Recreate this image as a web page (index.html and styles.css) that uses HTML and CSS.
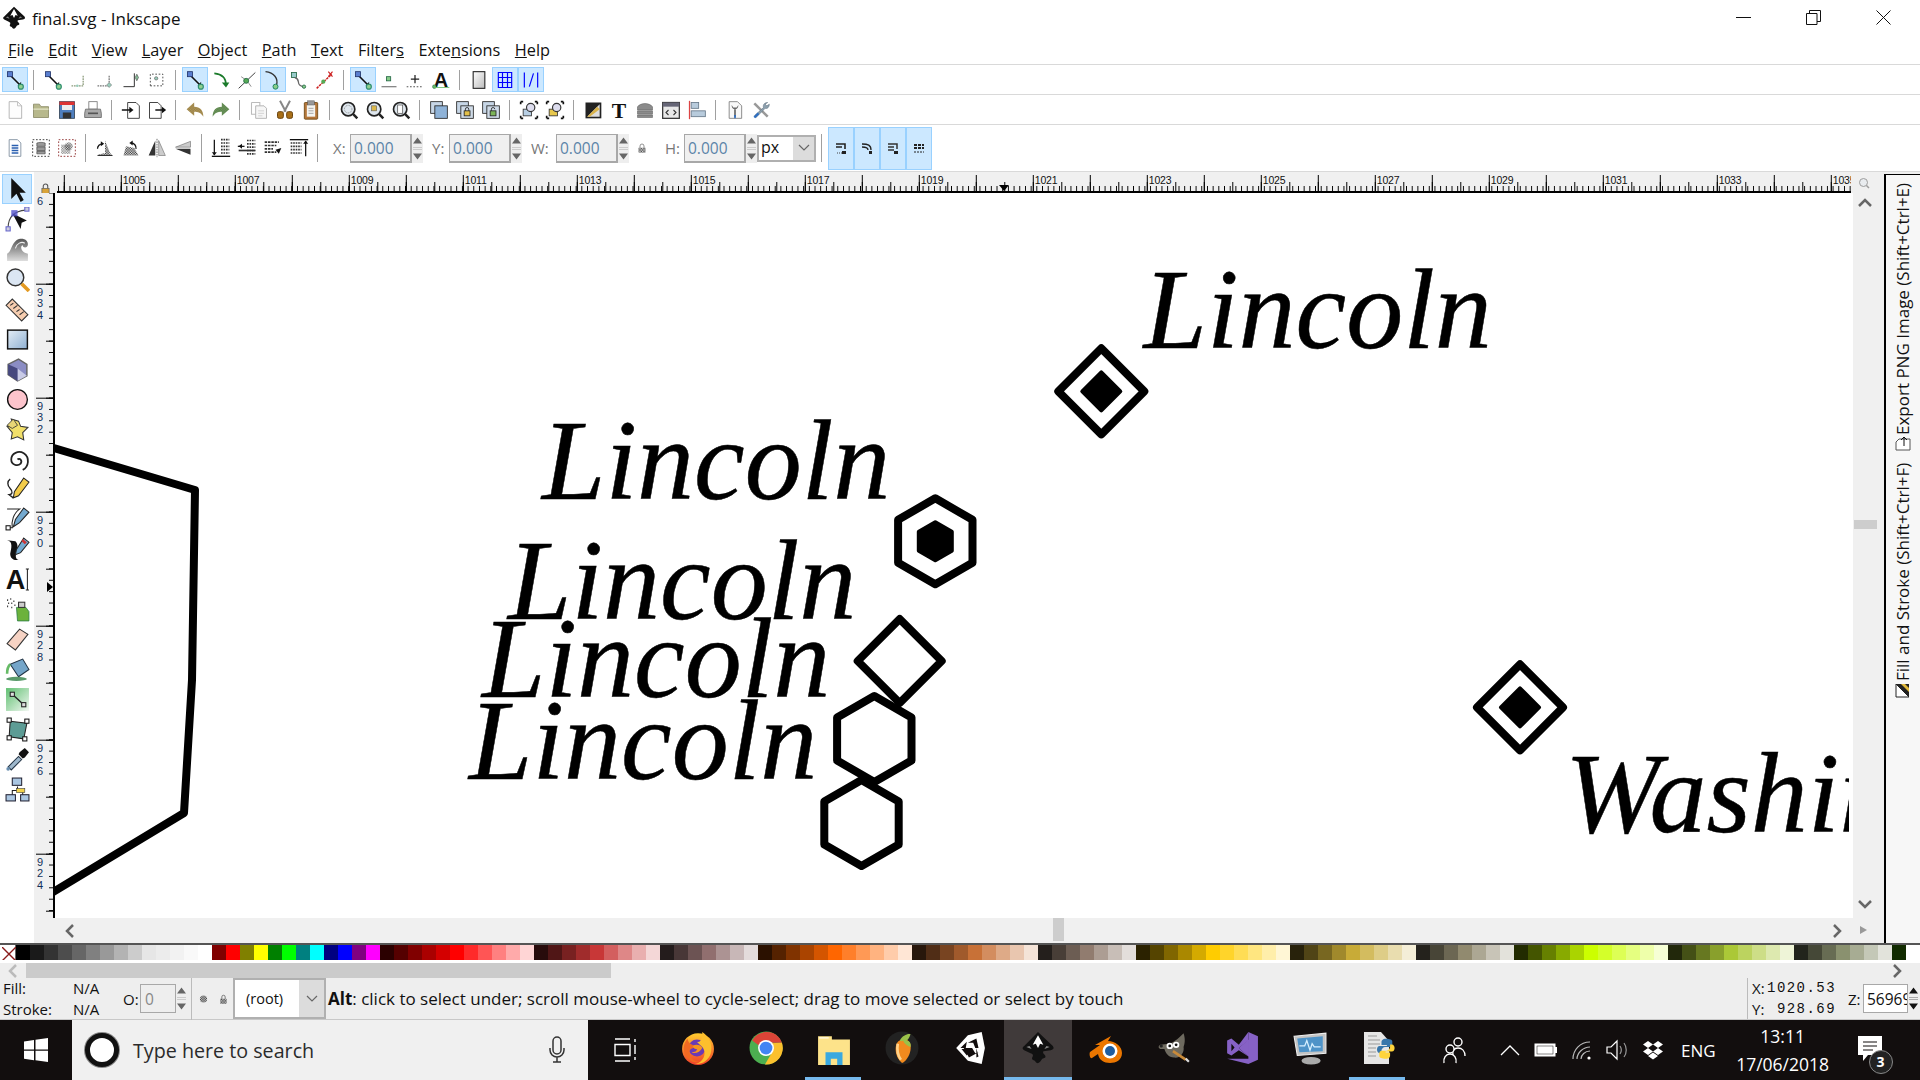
FILE: index.html
```html
<!DOCTYPE html>
<html lang="en">
    <head>
        <meta charset="UTF-8" />
        <title>final.svg - Inkscape</title>
        <link rel="stylesheet" href="styles.css">
    </head>
    <body>
        <!-- shared gradients and icons -->
        <svg class="defs" width="0" height="0">
            <defs>
                <linearGradient id="gBlue" x1="0" y1="0" x2="1" y2="1"><stop offset="0" stop-color="#e3edf6"/><stop offset="1" stop-color="#8fb0d2"/></linearGradient>
                <linearGradient id="gGray" x1="0" y1="0" x2="0" y2="1"><stop offset="0" stop-color="#555"/><stop offset="1" stop-color="#ddd"/></linearGradient>
                <linearGradient id="gGreen" x1="0" y1="0" x2="1" y2="1"><stop offset="0" stop-color="#5fbf70"/><stop offset="1" stop-color="#f2f8f2"/></linearGradient>
                <linearGradient id="gPaper" x1="0" y1="0" x2="1" y2="1"><stop offset="0" stop-color="#fff"/><stop offset="1" stop-color="#bbb"/></linearGradient>
                <linearGradient id="gFox" x1="0" y1="0" x2="0" y2="1"><stop offset="0" stop-color="#ffcb2e"/><stop offset="1" stop-color="#f0402a"/></linearGradient>
                <pattern id="dots" width="2" height="2" patternUnits="userSpaceOnUse"><rect width="1" height="1" fill="#222"/><rect x="1" y="1" width="1" height="1" fill="#222"/></pattern>
                <symbol id="snap" viewBox="0 0 24 24">
                    <path d="M6 6L18 18" stroke="#111" stroke-width="2"/>
                    <path d="M15 18.5l4-.5.5-4z" fill="#111"/>
                    <rect x="3" y="2" width="6" height="6" fill="#5a7fd0" stroke="#22356b"/>
                    <circle cx="19" cy="20" r="3" fill="#8fcf8f" stroke="#2f8f6f" stroke-width="1.4"/>
                </symbol>
                <symbol id="lens" viewBox="0 0 24 24">
                    <circle cx="11" cy="11" r="8" fill="#dfe7ee" stroke="#222" stroke-width="2"/>
                    <path d="M17 17l5 5" stroke="#222" stroke-width="3"/>
                </symbol>
                <symbol id="bars" viewBox="0 0 24 24">
                    <path d="M12 3h10M12 7h10M12 11h10M12 15h10M12 19h10" stroke="#333" stroke-width="2" stroke-dasharray="2 1"/>
                </symbol>
                <symbol id="inkscape" viewBox="0 0 32 32">
                    <path d="M16 1L30 14q2 3-2 4l-7 1q-1 2 1 3 3 3-2 4l-2 3q-3 3-5-1-4-1-2-4 1-2-2-3l-6-3q-3-2 0-4z" fill="#111"/>
                    <path d="M16 4l5 9-3-1-2 4-2-4-3 1z" fill="#fff"/>
                    <path d="M24 14l3 1-5 2zM8 14l-3 1 5 2z" fill="#8a8a8a"/>
                </symbol>
                <symbol id="spin" viewBox="0 0 11 28">
                    <path d="M5.5 3l4.5 6H1zM5.5 25l4.5-6H1z" fill="#666"/>
                    <path d="M1 13h9M1 15h9" stroke="#ccc"/>
                </symbol>
            </defs>
        </svg>

        <header class="titlebar">
            <svg class="app-icon" viewBox="0 0 32 32"><use href="#inkscape"/></svg>
            <span class="title-text">final.svg - Inkscape</span>
            <div class="win-controls">
                <svg width="15" height="15" viewBox="0 0 15 15"><path d="M0 7.500h15" stroke="#111"/></svg>
                <svg width="15" height="15" viewBox="0 0 15 15"><path d="M.5 3.500h10.500v11H.5zM3.500 3.500V.5h11v11H11" fill="none" stroke="#111"/></svg>
                <svg width="15" height="15" viewBox="0 0 15 15"><path d="M.5.5l14 14M14.500.5l-14 14" stroke="#111"/></svg>
            </div>
        </header>

        <nav class="menubar">
            <span><u>F</u>ile</span>
            <span><u>E</u>dit</span>
            <span><u>V</u>iew</span>
            <span><u>L</u>ayer</span>
            <span><u>O</u>bject</span>
            <span><u>P</u>ath</span>
            <span><u>T</u>ext</span>
            <span>Filter<u>s</u></span>
            <span>Exte<u>n</u>sions</span>
            <span><u>H</u>elp</span>
        </nav>

        <!-- snap bar -->
        <div class="toolbar">
            <button class="tb on"><svg class="ic"><use href="#snap"/></svg></button>
            <i class="sep"></i>
            <button class="tb"><svg class="ic"><use href="#snap"/></svg></button>
            <button class="tb"><svg class="ic" viewBox="0 0 24 24"><path d="M3 19h14V6" fill="none" stroke="#8a9a7a" stroke-width="1.5" stroke-dasharray="2 1"/><circle cx="10" cy="19" r="1.5" fill="#9cb"/></svg></button>
            <button class="tb"><svg class="ic" viewBox="0 0 24 24"><path d="M3 19h14V6" fill="none" stroke="#777" stroke-width="1.5" stroke-dasharray="2 1"/><path d="M17 15l3 3-3 3-3-3z" fill="#9cb" stroke="#777" stroke-width=".7"/></svg></button>
            <button class="tb"><svg class="ic" viewBox="0 0 24 24"><path d="M3 20h13V4" fill="none" stroke="#333" stroke-width="1.2"/><path d="M19 5l2 4-2 4-2-4z" fill="#8b9" stroke="#333" stroke-width=".6"/></svg></button>
            <button class="tb"><svg class="ic" viewBox="0 0 24 24"><path d="M4 19h15V5H4z" fill="none" stroke="#333" stroke-width="1" stroke-dasharray="2 2"/><circle cx="11" cy="10" r="2" fill="#9cb" stroke="#555" stroke-width=".7"/></svg></button>
            <i class="sep"></i>
            <button class="tb on"><svg class="ic"><use href="#snap"/></svg></button>
            <button class="tb"><svg class="ic" viewBox="0 0 24 24"><path d="M4 4c10 1 14 6 14 14" fill="none" stroke="#1a7a2a" stroke-width="2"/><path d="M13 15l5 6 4-6z" fill="#1a7a2a"/></svg></button>
            <button class="tb"><svg class="ic" viewBox="0 0 24 24"><path d="M2 22L22 3" stroke="#444" stroke-width="1.2"/><path d="M5 8c5 3 9 7 12 12" fill="none" stroke="#777"/><circle cx="11" cy="13" r="3" fill="#5a5" stroke="#264"/></svg></button>
            <button class="tb on"><svg class="ic" viewBox="0 0 24 24"><path d="M3 2c10 1 16 8 13 17" fill="none" stroke="#333" stroke-width="1.6"/><circle cx="15" cy="20" r="3" fill="#8c8" stroke="#286" stroke-width="1.2"/></svg></button>
            <button class="tb"><svg class="ic" viewBox="0 0 24 24"><rect x="3" y="3" width="6" height="6" fill="#9cc" stroke="#264"/><path d="M7 9c8 2 0 9 10 11" fill="none" stroke="#666" stroke-width="1.6"/><circle cx="18" cy="20" r="2" fill="#8c8" stroke="#264"/></svg></button>
            <button class="tb"><svg class="ic" viewBox="0 0 24 24"><path d="M2 22L20 5" stroke="#c22" stroke-width="1.8" stroke-dasharray="3 1"/><path d="M16 2l5 6M21 2l-5 6" stroke="#c22" stroke-width="1.4"/><circle cx="10" cy="14" r="2.5" fill="#5a5"/></svg></button>
            <i class="sep"></i>
            <button class="tb on"><svg class="ic"><use href="#snap"/></svg></button>
            <button class="tb"><svg class="ic" viewBox="0 0 24 24"><path d="M3 20h18" stroke="#888" stroke-width="1.6"/><rect x="9" y="8" width="5" height="5" fill="#8c8" stroke="#264"/></svg></button>
            <button class="tb"><svg class="ic" viewBox="0 0 24 24"><path d="M7 11h10M12 6v10" stroke="#222" stroke-width="1.5"/><path d="M2 20h20" stroke="#555" stroke-width="1.3" stroke-dasharray="2 2"/></svg></button>
            <button class="tb"><svg class="ic" viewBox="0 0 24 24"><text class="glyph" x="12" y="20" font-size="24" text-anchor="middle">A</text><circle cx="4" cy="20" r="2.2" fill="#6b6" stroke="#264" stroke-width=".6"/><path d="M4 21h18" stroke="#6b6"/></svg></button>
            <i class="sep"></i>
            <button class="tb"><svg class="ic" viewBox="0 0 24 24"><rect x="5" y="2" width="14" height="20" fill="url(#gPaper)" stroke="#222" stroke-width="1.3"/></svg></button>
            <button class="tb on"><svg class="ic" viewBox="0 0 24 24"><path d="M4 3h16v18H4zM4 9h16M4 15h16M9 3v18M15 3v18" fill="none" stroke="#00f" stroke-width="1.4"/></svg></button>
            <button class="tb on"><svg class="ic" viewBox="0 0 24 24"><path d="M4 3v18M20 3v18" stroke="#00f" stroke-width="1.4"/><path d="M10 20L15 4" stroke="#00f" stroke-width="1.4"/></svg></button>
        </div>

        <!-- commands bar -->
        <div class="toolbar">
            <button class="tb"><svg class="ic" viewBox="0 0 24 24"><path d="M5 2h10l5 5v15H5z" fill="#fdfdfd" stroke="#aaa"/><path d="M15 2v5h5" fill="none" stroke="#bbb"/></svg></button>
            <button class="tb"><svg class="ic" viewBox="0 0 24 24"><path d="M3 5h7l2 3h9v13H3z" fill="#b7b88c" stroke="#8a8a66"/><path d="M3 11h18" stroke="#d8d9b8" stroke-width="2"/></svg></button>
            <button class="tb"><svg class="ic" viewBox="0 0 24 24"><rect x="3" y="2" width="18" height="20" fill="#4f7fbf" stroke="#345"/><rect x="3" y="2" width="18" height="4" fill="#d33"/><rect x="6" y="6" width="12" height="6" fill="#eee"/><rect x="7" y="15" width="10" height="7" fill="#333"/></svg></button>
            <button class="tb"><svg class="ic" viewBox="0 0 24 24"><rect x="7" y="2" width="10" height="9" fill="#fff" stroke="#777"/><path d="M3 11h18l1 5v5H2v-5z" fill="#aaa" stroke="#666"/><path d="M6 16h12" stroke="#555" stroke-width="2"/></svg></button>
            <i class="sep"></i>
            <button class="tb"><svg class="ic" viewBox="0 0 24 24"><path d="M8 3h10l4 4v15H8z" fill="#fff" stroke="#222"/><path d="M1 12h12" stroke="#111" stroke-width="1.8"/><path d="M10 8l5 4-5 4z" fill="#111"/></svg></button>
            <button class="tb"><svg class="ic" viewBox="0 0 24 24"><path d="M3 3h10l4 4v15H3z" fill="#fff" stroke="#222"/><path d="M10 12h11" stroke="#111" stroke-width="1.8"/><path d="M18 8l5 4-5 4z" fill="#111"/></svg></button>
            <i class="sep"></i>
            <button class="tb"><svg class="ic" viewBox="0 0 24 24"><path d="M2 11l9-8v5c7 0 11 4 11 12-3-5-6-6-11-6v5z" fill="#b69a56"/><path d="M2 11l9-8v5c7 0 11 4 11 12-3-5-6-6-11-6v5z" fill="url(#dots)" opacity=".25"/></svg></button>
            <button class="tb"><svg class="ic" viewBox="0 0 24 24"><path d="M22 11l-9-8v5C6 8 2 12 2 20c3-5 6-6 11-6v5z" fill="#6e9c5c"/><path d="M22 11l-9-8v5C6 8 2 12 2 20c3-5 6-6 11-6v5z" fill="url(#dots)" opacity=".25"/></svg></button>
            <i class="sep"></i>
            <button class="tb"><svg class="ic" viewBox="0 0 24 24"><path d="M3 3h10v4M3 3v14h5" fill="none" stroke="#bbb" stroke-width="1.3"/><path d="M8 7h10l3 3v12H8z" fill="#f6f6f6" stroke="#aaa"/><path d="M11 13h7M11 16h7M11 19h5" stroke="#ccc"/></svg></button>
            <button class="tb"><svg class="ic" viewBox="0 0 24 24"><path d="M6 1l7 13M18 1l-7 13" stroke="#888" stroke-width="2.4"/><rect x="3" y="14" width="7" height="8" rx="2" fill="#a86f18" stroke="#6a4410" stroke-width="1.2"/><rect x="14" y="14" width="7" height="8" rx="2" fill="#a86f18" stroke="#6a4410" stroke-width="1.2"/></svg></button>
            <button class="tb"><svg class="ic" viewBox="0 0 24 24"><rect x="4" y="3" width="16" height="20" rx="1" fill="#b5773a" stroke="#6a4410"/><rect x="7" y="6" width="10" height="14" fill="#f4f4f0"/><rect x="8" y="1" width="8" height="5" fill="#999" stroke="#555" stroke-width=".6"/><path d="M9 10h6M9 13h6M9 16h6" stroke="#999"/></svg></button>
            <i class="sep"></i>
            <button class="tb"><svg class="ic" viewBox="0 0 24 24"><use href="#lens"/><circle cx="11" cy="11" r="4.5" fill="none" stroke="#777" stroke-dasharray="1 1"/></svg></button>
            <button class="tb"><svg class="ic" viewBox="0 0 24 24"><use href="#lens"/><rect x="8" y="7" width="6" height="6" fill="#dcb94c" stroke="#555" stroke-width=".7"/></svg></button>
            <button class="tb"><svg class="ic" viewBox="0 0 24 24"><use href="#lens"/><rect x="8" y="6" width="6" height="10" fill="#fff" stroke="#555" stroke-width=".9"/></svg></button>
            <i class="sep"></i>
            <button class="tb"><svg class="ic" viewBox="0 0 24 24"><rect x="2" y="2" width="14" height="14" fill="#c7d6e6" stroke="#222"/><rect x="7" y="7" width="15" height="15" fill="#8fb3d8" stroke="#222"/></svg></button>
            <button class="tb"><svg class="ic" viewBox="0 0 24 24"><rect x="2" y="2" width="14" height="14" fill="#c7d6e6" stroke="#222"/><rect x="7" y="7" width="15" height="15" fill="#cfdbe8" stroke="#222"/><rect x="11" y="13" width="7" height="6" fill="#e3c04a" stroke="#222"/><path d="M12.5 13v-2a2 2 0 014 0v2" fill="none" stroke="#222"/></svg></button>
            <button class="tb"><svg class="ic" viewBox="0 0 24 24"><rect x="2" y="2" width="14" height="14" fill="#c7d6e6" stroke="#222"/><rect x="7" y="7" width="15" height="15" fill="#cfdbe8" stroke="#222"/><rect x="11" y="13" width="7" height="6" fill="#7cb457" stroke="#222"/><path d="M12.5 13v-2a2 2 0 014 0" fill="none" stroke="#222"/></svg></button>
            <i class="sep"></i>
            <button class="tb"><svg class="ic" viewBox="0 0 24 24"><path d="M2 2h3M19 2h3M2 22h3M19 22h3M2 2v3M22 2v3M2 19v3M22 19v3" stroke="#111" stroke-width="2"/><rect x="5" y="11" width="10" height="8" fill="#b8cfe4" stroke="#333"/><circle cx="14" cy="9" r="5" fill="#dde" stroke="#333" stroke-width="1.4"/></svg></button>
            <button class="tb"><svg class="ic" viewBox="0 0 24 24"><path d="M2 2h3M19 2h3M2 22h3M19 22h3M2 2v3M22 2v3M2 19v3M22 19v3" stroke="#111" stroke-width="2"/><rect x="5" y="11" width="10" height="8" fill="#e8c84e" stroke="#333"/><circle cx="14" cy="9" r="5" fill="#dde" stroke="#333" stroke-width="1.4"/></svg></button>
            <i class="sep"></i>
            <button class="tb"><svg class="ic" viewBox="0 0 24 24"><rect x="3" y="3" width="19" height="19" fill="#222"/><path d="M5 20L20 5v15z" fill="#ddd"/><path d="M5 20L17 8l3 3-12 9z" fill="#d8b24a"/></svg></button>
            <button class="tb"><svg class="ic" viewBox="0 0 24 24"><text class="glyph serif" x="12" y="21" font-size="26" text-anchor="middle">T</text></svg></button>
            <button class="tb"><svg class="ic" viewBox="0 0 24 24"><path d="M3 8c4-5 14-5 18 0v4H3zM3 13h18v4H3zM3 18h18v3H3z" fill="#8b8b8b" stroke="#555" stroke-width=".6"/></svg></button>
            <button class="tb"><svg class="ic" viewBox="0 0 24 24"><rect x="2" y="3" width="20" height="19" fill="#e8e8e8" stroke="#333" stroke-width="1.5"/><rect x="2" y="3" width="20" height="5" fill="#667"/><path d="M9 12l-3 3 3 3M15 12l3 3-3 3" fill="none" stroke="#333" stroke-width="1.3"/></svg></button>
            <button class="tb"><svg class="ic" viewBox="0 0 24 24"><path d="M3 1v22" stroke="#d44" stroke-width="1.5"/><rect x="5" y="3" width="9" height="7" fill="#b8cbdc" stroke="#678"/><rect x="5" y="13" width="17" height="7" fill="#b8cbdc" stroke="#678"/></svg></button>
            <i class="sep"></i>
            <button class="tb"><svg class="ic" viewBox="0 0 24 24"><path d="M5 2h10l5 5v15H5z" fill="#f8f8f8" stroke="#777"/><path d="M8 6c0 4 2 5 4 5s4-1 4-5l-2 3h-4zM11 11h2v9h-2z" fill="#666"/><path d="M11 18h2v4h-2z" fill="#2a6ac0"/></svg></button>
            <button class="tb"><svg class="ic" viewBox="0 0 24 24"><path d="M4 4l16 16" stroke="#999" stroke-width="3"/><path d="M20 3c-4 0-6 3-5 6L4 19l2 2 11-11c3 1 5-2 5-5l-3 2-2-2z" fill="#8da0ad" stroke="#567" stroke-width=".6"/><path d="M3 20l5-5 2 2-5 5z" fill="#2f6fc0"/></svg></button>
        </div>

        <!-- selector controls bar -->
        <div class="toolbar toolbar-tall">
            <button class="tb"><svg class="ic" viewBox="0 0 24 24"><path d="M5 2h10l4 4v16H5z" fill="#fff" stroke="#789"/><path d="M8 9h8M8 12h8M8 15h8M8 18h8" stroke="#2a5fb0" stroke-width="1.6"/></svg></button>
            <button class="tb"><svg class="ic" viewBox="0 0 24 24"><rect x="2" y="2" width="20" height="20" fill="none" stroke="#222" stroke-dasharray="2 2"/><path d="M7 6c3-1 7-1 10 0v4H7zM7 11h10v4H7zM7 16h10v3H7z" fill="#999" stroke="#333" stroke-width=".7"/></svg></button>
            <button class="tb"><svg class="ic" viewBox="0 0 24 24"><rect x="2" y="2" width="20" height="20" fill="none" stroke="#822" stroke-dasharray="2 2"/><rect x="5" y="8" width="11" height="11" fill="url(#dots)" opacity=".6"/><circle cx="14" cy="10" r="5" fill="url(#dots)" opacity=".7"/></svg></button>
            <i class="sep"></i>
            <button class="tb"><svg class="ic" viewBox="0 0 24 24"><path d="M3 20l9-2V3l6 15 3 3H6z" fill="url(#dots)"/><path d="M3 13a6 6 0 016-6" fill="none" stroke="#111" stroke-width="1.5"/><path d="M7 4l4 3-4 3z" fill="#111"/><path d="M3 21h18" stroke="#111"/></svg></button>
            <button class="tb"><svg class="ic" viewBox="0 0 24 24"><path d="M3 21l3-11 10 2 5 9z" fill="url(#dots)"/><path d="M18 13a6 6 0 00-6-7" fill="none" stroke="#111" stroke-width="1.5"/><path d="M14 3l-4 3 4 3z" fill="#111"/></svg></button>
            <button class="tb"><svg class="ic" viewBox="0 0 24 24"><path d="M10 3L2 21h8z" fill="#333"/><path d="M14 3l8 18h-8z" fill="#ccc" stroke="#555" stroke-width=".6"/><path d="M12 1v22" stroke="#555" stroke-dasharray="2 1"/></svg></button>
            <button class="tb"><svg class="ic" viewBox="0 0 24 24"><path d="M21 4L3 11h18z" fill="#ccc" stroke="#555" stroke-width=".6"/><path d="M21 20L3 13h18z" fill="#333"/></svg></button>
            <i class="sep"></i>
            <button class="tb"><svg class="ic" viewBox="0 0 24 24"><path d="M4 2v18" stroke="#111" stroke-width="1.5"/><path d="M1 17l3 4 3-4z" fill="#111"/><path d="M1 22h22" stroke="#111" stroke-width="1.6"/><use href="#bars" x="0" y="-1" width="24" height="24"/></svg></button>
            <button class="tb"><svg class="ic" viewBox="0 0 24 24"><path d="M1 10h8" stroke="#111" stroke-width="1.5"/><path d="M6 7l4 3-4 3z" fill="#111" transform="rotate(180 6 10)"/><use href="#bars"/><path d="M2 15h20" stroke="#333" stroke-width="2"/></svg></button>
            <button class="tb"><svg class="ic" viewBox="0 0 24 24"><path d="M2 5h17M2 9h14M2 13h10M2 17h14" stroke="#333" stroke-width="2" stroke-dasharray="3 1"/><path d="M15 14l7-2-3 7z" fill="#111"/></svg></button>
            <button class="tb"><svg class="ic" viewBox="0 0 24 24"><path d="M20 4v18" stroke="#111" stroke-width="1.5"/><path d="M17 7l3-4 3 4z" fill="#111"/><path d="M1 2h22" stroke="#111" stroke-width="1.6"/><path d="M2 6h13M2 10h13M2 14h13M2 18h13" stroke="#333" stroke-width="2" stroke-dasharray="2 1"/></svg></button>
            <i class="sep"></i>
            <div class="field"><label>X:</label><span class="num">0.000</span><svg class="spinner"><use href="#spin"/></svg></div>
            <div class="field"><label>Y:</label><span class="num">0.000</span><svg class="spinner"><use href="#spin"/></svg></div>
            <div class="field field-w"><label>W:</label><span class="num">0.000</span><svg class="spinner"><use href="#spin"/></svg></div>
            <svg class="wh-lock" viewBox="0 0 10 12"><path d="M2.500 6V3.500a2.500 2.500 0 015 0V6" fill="none" stroke="#777"/><rect x="1" y="6" width="8" height="5.500" fill="url(#dots)" stroke="#888" stroke-width=".6"/></svg>
            <div class="field field-h"><label>H:</label><span class="num">0.000</span><svg class="spinner"><use href="#spin"/></svg></div>
            <div class="combo combo-unit"><span>px</span><b><svg width="12" height="8" viewBox="0 0 12 8"><path d="M1 1l5 5 5-5" fill="none" stroke="#666" stroke-width="1.2"/></svg></b></div>
            <i class="sep sep-unit"></i>
            <div class="toggles">
                <button><svg viewBox="0 0 14 14"><path d="M2 3h9v5M2 6h6" fill="none" stroke="#222" stroke-width="1.6"/><path d="M3 12h6" stroke="#444" stroke-dasharray="1 1"/><path d="M8 10h4v3H8z" fill="#222"/></svg></button>
                <button><svg viewBox="0 0 14 14"><path d="M2 3c6 0 9 1 9 6M2 6c3 0 6 0 6 3" fill="none" stroke="#222" stroke-width="1.3"/><path d="M9 10h3v3H9z" fill="#222"/></svg></button>
                <button><svg viewBox="0 0 14 14"><path d="M2 3h9v5M2 6h6M2 9h6" fill="none" stroke="#333" stroke-width="1.500"/><path d="M8 10h4v3H8z" fill="#222"/></svg></button>
                <button><svg viewBox="0 0 14 14"><path d="M2 3h3v2H2zM6 3h3v2H6zM10 3h2v2h-2zM2 6h3v2H2zM6 6h3v2H6zM10 6h2v2h-2z" fill="#222"/><path d="M2 11h10" stroke="#222" stroke-dasharray="2 1"/></svg></button>
            </div>
        </div>

        <div class="workspace">
            <aside class="toolbox">
                <button class="tool on"><svg viewBox="0 0 24 24"><path d="M6 1v20l5-5 4 8 3-2-4-7h6z" fill="#111"/></svg></button>
                <button class="tool"><svg viewBox="0 0 24 24"><path d="M3 20C3 10 8 4 20 3" fill="none" stroke="#444"/><path d="M7 6l14 7-5 2-1 6z" fill="#111"/><rect x="6" y="3" width="6" height="6" fill="#55c" opacity=".8"/><rect x="19" y="0" width="4" height="4" fill="#ccd" stroke="#66c"/><rect x="1" y="19" width="4" height="4" fill="#ccd" stroke="#66c"/></svg></button>
                <button class="tool"><svg viewBox="0 0 24 24"><path d="M2 23v-7C6 14 6 7 11 3c5-3 11-1 11 4 0 4-5 4-5 1-3 1-1 6 2 7l3 1v7z" fill="url(#gGray)"/><path d="M10 11c1-5 6-7 9-5" fill="none" stroke="#eee"/></svg></button>
                <button class="tool"><svg viewBox="0 0 24 24"><circle cx="10" cy="10" r="8" fill="#dbe6f3" stroke="#333" stroke-width="1.4"/><path d="M16 16l7 7" stroke="#e39a22" stroke-width="3.5"/></svg></button>
                <button class="tool"><svg viewBox="0 0 24 24"><path d="M1 8l6-6 15 15-6 6z" fill="#f6cdb0" stroke="#333"/><path d="M5 8l3-2M8 11l4-3M11 14l3-2M14 17l4-3" stroke="#333"/></svg></button>
                <button class="tool"><svg viewBox="0 0 24 24"><rect x="2.500" y="3" width="19" height="18" fill="url(#gBlue)" stroke="#111" stroke-width="1.4"/></svg></button>
                <button class="tool"><svg viewBox="0 0 24 24"><path d="M3 7l10-5 8 5v11l-9 5-9-6z" fill="#8b8dc4" stroke="#666" stroke-width="1.4"/><path d="M12 11l9 7-9 5z" fill="#c9cbe6"/><path d="M3 7l9 4v12l-9-6z" fill="#46487f"/></svg></button>
                <button class="tool"><svg viewBox="0 0 24 24"><circle cx="12" cy="12" r="9.500" fill="#fcc4cc" stroke="#111" stroke-width="1.300"/></svg></button>
                <button class="tool"><svg viewBox="0 0 24 24"><path d="M6 2l7 2 2 5 7 1-5 5 1 7-6-3-6 2 1-6-5-6 6-1z" fill="#f2e06a" stroke="#333" stroke-width="1"/><path d="M8 2l-6 6 5 3 5-3z" fill="#e8d676" stroke="#333" stroke-width=".8"/></svg></button>
                <button class="tool"><svg viewBox="0 0 24 24"><path d="M12 12c2-2 5 1 3 4-3 3-9 1-9-4 0-6 7-9 12-6 6 4 5 13-1 16" fill="none" stroke="#222" stroke-width="1.700"/></svg></button>
                <button class="tool"><svg viewBox="0 0 24 24"><path d="M5 2C2 4 2 8 5 11c3 3 2 6-1 6l4 3" fill="none" stroke="#222" stroke-width="1.300"/><path d="M18 1l5 4-10 13-5 2 1-6z" fill="#f3cc4a" stroke="#222"/></svg></button>
                <button class="tool"><svg viewBox="0 0 24 24"><path d="M2 2h12C8 6 6 14 7 20H3" fill="none" stroke="#222"/><rect x="1" y="18" width="4" height="4" fill="#fff" stroke="#111"/><path d="M18 1l5 4-9 10-6 4 2-7z" fill="#74a9cf" stroke="#222"/></svg></button>
                <button class="tool"><svg viewBox="0 0 24 24"><path d="M2 3c6 1 4 8 3 13 0 4 3 7 8 6-3-1-3-4-2-7 1-4 2-8-1-11z" fill="#111"/><path d="M18 1l5 4-8 10-5 2 1-5z" fill="#74a9cf" stroke="#222"/><path d="M17 2l4 3-2 2-3-3z" fill="#c33"/></svg></button>
                <button class="tool"><svg viewBox="0 0 24 24"><text class="glyph" x="10" y="21" font-size="26" text-anchor="middle">A</text><path d="M20 2h3M21.500 2v20M20 22h3" stroke="#222"/></svg></button>
                <button class="tool"><svg viewBox="0 0 24 24"><path d="M11 10h9l3 4v9H12z" fill="#6cb23c" stroke="#274" stroke-width=".7"/><rect x="13" y="5" width="6" height="5" fill="#ccc" stroke="#333"/><path d="M2 3h1M5 2h1M8 4h1M3 6h1M6 6h1M9 8h1M2 9h1M6 10h1" stroke="#333" stroke-width="1.500"/></svg></button>
                <button class="tool"><svg viewBox="0 0 24 24"><path d="M2 16L14 2l8 5-12 15z" fill="#f6d3c4" stroke="#333"/></svg></button>
                <button class="tool"><svg viewBox="0 0 24 24"><path d="M5 7l12-5 6 10-10 7z" fill="#74a5c9" stroke="#234"/><path d="M5 7c-2 2-3 4-3 9" fill="none" stroke="#6b6" stroke-width="2.500"/><ellipse cx="11" cy="21" rx="10" ry="2" fill="#5a9a6a"/></svg></button>
                <button class="tool"><svg viewBox="0 0 24 24"><rect x="1" y="1" width="22" height="22" fill="url(#gGreen)"/><path d="M7 7l11 10" stroke="#222" stroke-width="1.300"/><rect x="5" y="5" width="4" height="4" fill="#ddd" stroke="#222"/><rect x="16" y="15" width="4" height="4" fill="#ddd" stroke="#222"/></svg></button>
                <button class="tool"><svg viewBox="0 0 24 24"><path d="M5 4l16 2-3 15-14-2z" fill="#5d9c95" stroke="#222"/><rect x="2" y="1" width="4" height="4" fill="#fff" stroke="#111"/><rect x="19" y="2" width="4" height="4" fill="#fff" stroke="#111"/><rect x="2" y="18" width="4" height="4" fill="#fff" stroke="#111"/><rect x="17" y="19" width="4" height="4" fill="#fff" stroke="#111"/></svg></button>
                <button class="tool"><svg viewBox="0 0 24 24"><path d="M3 19L13 9l3 3L6 22z" fill="#9fb8cc" stroke="#234"/><path d="M14 5l5-4 4 4-4 5-2 1-4-4z" fill="#111"/><circle cx="3" cy="21" r="1.700" fill="#6a8fb0"/></svg></button>
                <button class="tool"><svg viewBox="0 0 24 24"><path d="M12 9v4H7v5M12 13h5v5" fill="none" stroke="#222"/><rect x="7" y="1" width="9" height="7" fill="#aac6e2" stroke="#223"/><rect x="11" y="11" width="8" height="4" fill="#f2d24a" stroke="#444" stroke-width=".6"/><rect x="1" y="17" width="9" height="6" fill="#aac6e2" stroke="#223"/><rect x="15" y="17" width="8" height="6" fill="#aac6e2" stroke="#223"/></svg></button>
            </aside>

            <div class="editor">
                <div class="ruler-row">
                    <div class="corner"><svg width="9" height="11" viewBox="0 0 10 12"><path d="M2.500 6V3.500a2.500 2.500 0 015 0V6" fill="none" stroke="#555" stroke-width="1.200"/><rect x="1" y="6" width="8" height="5.500" fill="#d9a43a" stroke="#555" stroke-width=".7"/></svg></div>
                    <div class="ruler-h" id="rulerH"><i class="ruler-pointer"></i></div>
                    <div class="corner-end"><svg width="12" height="12" viewBox="0 0 24 24"><use href="#lens" opacity=".4"/></svg></div>
                </div>
                <div class="editor-mid">
                    <div class="ruler-v" id="rulerV"><i class="ruler-pointer-v"></i></div>
                    <main class="canvas">
                        <svg class="drawing" viewBox="55 193 1794 725" width="1794" height="725">
                            <path class="stroke" d="M40 444L195 490 192 680 184 813 40 900"/>
                            <text class="lincoln" x="1143.500" y="348">Lincoln</text>
                            <text class="lincoln" x="542" y="498.500">Lincoln</text>
                            <text class="lincoln" x="508" y="618.500">Lincoln</text>
                            <text class="lincoln" x="482" y="696.500">Lincoln</text>
                            <text class="lincoln" x="469" y="779">Lincoln</text>
                            <text class="lincoln" x="1565" y="831.500">Washington</text>
                            <path class="stroke" d="M1101.300 348.300l43 43-43 43-43-43z"/>
                            <path class="solid" d="M1101.300 372.300l19 19-19 19-19-19z"/>
                            <path class="stroke" d="M1520 664.300l43 43-43 43-43-43z"/>
                            <path class="solid" d="M1520 688.300l19 19-19 19-19-19z"/>
                            <path class="stroke" d="M935.300 498.300l37.200 21.500v43l-37.200 21.500-37.200-21.500v-43z"/>
                            <path class="solid" d="M935.300 522.300l16.500 9.500v19l-16.500 9.500-16.500-9.500v-19z"/>
                            <path class="stroke" d="M899.700 619l42 42-42 42-42-42z"/>
                            <path class="stroke" d="M874.300 696l37.200 21.500v43L874.300 782l-37.200-21.500v-43z"/>
                            <path class="stroke" d="M861.500 780l37.200 21.500v43L861.500 866l-37.200-21.500v-43z"/>
                        </svg>
                    </main>
                    <div class="vscroll">
                        <svg width="14" height="9" viewBox="0 0 14 9"><path d="M1 8l6-6 6 6" fill="none" stroke="#666" stroke-width="2.500"/></svg>
                        <i class="vthumb"></i>
                        <svg width="14" height="9" viewBox="0 0 14 9"><path d="M1 1l6 6 6-6" fill="none" stroke="#666" stroke-width="2.500"/></svg>
                    </div>
                </div>
                <div class="hscroll">
                    <svg width="9" height="14" viewBox="0 0 9 14"><path d="M8 1L2 7l6 6" fill="none" stroke="#666" stroke-width="2.500"/></svg>
                    <i class="hthumb"></i>
                    <svg width="9" height="14" viewBox="0 0 9 14"><path d="M1 1l6 6-6 6" fill="none" stroke="#666" stroke-width="2.500"/></svg>
                    <svg class="cms" width="7" height="8" viewBox="0 0 7 8"><path d="M0 0l7 4-7 4z" fill="#999"/></svg>
                </div>
            </div>

            <aside class="dock">
                <div class="dock-tabs">
                    <span class="dock-tab"><svg width="16" height="16" viewBox="0 0 16 16"><path d="M1 14L14 1v13z" fill="#222"/><path d="M1 1h13L1 14z" fill="#fff" stroke="#222"/><path d="M6 14l8-8v4l-4 4z" fill="#e0b83c"/></svg>Fill and Stroke (Shift+Ctrl+F)</span>
                    <span class="dock-tab"><svg width="16" height="16" viewBox="0 0 16 16"><path d="M2 1h8l3 3v11H2z" fill="#fff" stroke="#555"/><path d="M6 9h9M12 6l3 3-3 3" fill="none" stroke="#111"/></svg>Export PNG Image (Shift+Ctrl+E)</span>
                </div>
            </aside>
        </div>

        <div class="palette" id="palette">
            <span class="swatch none"><svg width="14" height="14" viewBox="0 0 14 14"><path d="M0 0l14 14M14 0L0 14" stroke="#8a1c1c" stroke-width="1.400"/></svg></span>
        </div>

        <div class="palette-scroll">
            <svg width="9" height="14" viewBox="0 0 9 14"><path d="M8 1L2 7l6 6" fill="none" stroke="#bbb" stroke-width="2.500"/></svg>
            <i class="pthumb"></i>
            <svg width="9" height="14" viewBox="0 0 9 14"><path d="M1 1l6 6-6 6" fill="none" stroke="#666" stroke-width="2.500"/></svg>
        </div>

        <footer class="statusbar">
            <div class="fillstroke">
                <span>Fill:</span><span>N/A</span>
                <span>Stroke:</span><span>N/A</span>
            </div>
            <div class="opacity">
                <label>O:</label><span class="num num-o">0</span><svg class="spinner"><use href="#spin"/></svg>
            </div>
            <i class="status-sep"></i>
            <svg class="layer-ic" viewBox="0 0 10 10"><circle cx="5" cy="5" r="4" fill="url(#dots)"/></svg>
            <svg class="layer-ic" viewBox="0 0 10 12"><path d="M3 6V3.500a2 2 0 014 0V6" fill="none" stroke="#666"/><rect x="1.500" y="6" width="7" height="5.500" fill="url(#dots)" stroke="#777" stroke-width=".5"/></svg>
            <div class="combo combo-layer"><span>(root)</span><b><svg width="12" height="8" viewBox="0 0 12 8"><path d="M1 1l5 5 5-5" fill="none" stroke="#666" stroke-width="1.200"/></svg></b></div>
            <p class="hint"><b>Alt</b>: click to select under; scroll mouse-wheel to cycle-select; drag to move selected or select by touch</p>
            <div class="coords">
                <span>X:</span><code>1020.53</code>
                <span>Y:</span><code>928.69</code>
            </div>
            <label class="zoom-label">Z:</label>
            <span class="num num-z">56969</span>
            <svg class="spinner spinner-z" viewBox="0 0 11 28"><path d="M5.500 3l4.500 6H1zM5.500 25l4.500-6H1z" fill="#111"/><path d="M1 13h9M1 15h9" stroke="#aaa"/></svg>
        </footer>

        <div class="taskbar">
            <svg class="start" width="24" height="24" viewBox="0 0 24 24"><path d="M0 3.500l10-1.500v9.500H0zM11.500 1.800L24 0v11.500H11.500zM0 12.800h10v9.500L0 20.800zM11.500 12.800H24V24l-12.500-1.800z" fill="#fff"/></svg>
            <div class="searchbox">
                <i class="cortana"></i>
                <span>Type here to search</span>
                <svg class="mic" width="16" height="28" viewBox="0 0 16 28"><rect x="4" y="1" width="8" height="17" rx="4" fill="none" stroke="#333" stroke-width="1.500"/><path d="M1 12v2a7 7 0 0014 0v-2M8 21v5M4 26h8" fill="none" stroke="#333" stroke-width="1.500"/></svg>
            </div>
            <svg class="taskview" width="26" height="24" viewBox="0 0 26 24"><path d="M4 1h15M4 6.500h15v11H4zM4 23h15M24 1v3M24 7v9M24 19v3" fill="none" stroke="#fff" stroke-width="1.400"/></svg>
            <div class="apps">
                <span class="app"><svg viewBox="0 0 32 32"><circle cx="16" cy="17" r="15" fill="url(#gFox)"/><circle cx="15" cy="16" r="8" fill="#6b3ab5"/><path d="M20 1c7 5 10 12 8 20-2 7-9 11-15 10 6-1 10-6 9-12-1-5-5-6-7-9 2 1 5 0 5-9z" fill="#fdbf2d"/><path d="M6 7c-3 4-4 8-3 13 2 7 9 11 15 9-6 0-10-4-10-9 0-4 4-4 7-5-3-2-8-2-9-8z" fill="#f26a22"/><path d="M11 14c3-2 8-1 9 2-2 4-7 6-10 4 3 0 5-1 5-3-2 0-3-1-4-3z" fill="#f7941d"/></svg></span>
                <span class="app"><svg viewBox="0 0 32 32"><circle cx="16" cy="16" r="15.500" fill="#4caf50"/><path d="M3 9a15.500 15.500 0 0126-2l2 4H16a5 5 0 00-6 3z" fill="#db4437"/><path d="M31 11a15.500 15.500 0 01-16 20.500l7-12a7 7 0 00-3-8z" fill="#fbc02d"/><circle cx="16" cy="16" r="7.500" fill="#fff"/><circle cx="16" cy="16" r="6" fill="#4285f4"/></svg></span>
                <span class="app app-running"><svg viewBox="0 0 32 32"><path d="M1 5h13v3h17v25H1z" fill="#fde38a"/><path d="M2 6h9v1H2z" fill="#fff"/><path d="M8 33V20h16v13h-5v-7h-6v7z" fill="#3aa9e0"/></svg></span>
                <span class="app"><svg viewBox="0 0 32 32"><circle cx="16" cy="16" r="15.500" fill="#222"/><path d="M16 8c6-1 9 3 8 10-1 6-5 11-8 12-4-3-6-8-6-13 0-5 2-8 6-9z" fill="#f28a1e"/><path d="M14 9c2-5 8-7 10-6-1 3-2 5-4 6 3 0 5 3 4 6-3-1-6-3-7-6-1 1-2 1-3 0z" fill="#9ac14a"/><path d="M12 12c-1 6 0 11 3 15" fill="none" stroke="#ffd28a" stroke-width="2.500"/></svg></span>
                <span class="app"><svg viewBox="0 0 32 32"><path d="M27 1l3 15-3 15-13-3-11-12L14 4z" fill="#fff"/><path d="M14 11l8-4 2 9-3 0-2-5zM10 16h8l3 5 3-1-9 5zM7 16l6-6-1 6zM22 16l2 8-2 1zM13 23l-5-6h8z" fill="#120d0d"/></svg></span>
                <span class="app app-active"><svg viewBox="0 0 32 32"><use href="#inkscape"/></svg></span>
                <span class="app"><svg viewBox="0 0 34 32"><path d="M1 20l10-7H6l16-9-3 5c7 0 14 5 14 12 0 7-6 10-12 10-6 0-11-3-12-9l-6 4c-2 1-3-4-2-6z" fill="#ea7600"/><circle cx="21" cy="19" r="7.500" fill="#fff"/><circle cx="21" cy="19" r="5" fill="#1f5d9f"/></svg></span>
                <span class="app"><svg viewBox="0 0 32 32"><path d="M25 2c2 6 1 10 0 13 1 5-3 11-9 10-5 0-8-4-9-8l-4 0c-2-1-2-3 0-4l8-1c4-1 8-4 14-10z" fill="#6e6a5f"/><circle cx="12" cy="14" r="3" fill="#fff"/><circle cx="18" cy="13" r="3" fill="#fff"/><circle cx="12" cy="14" r="1.300" fill="#111"/><circle cx="18" cy="13" r="1.300" fill="#111"/><path d="M15 19l12 8" stroke="#c98a3a" stroke-width="2.500"/><path d="M27 26l3 3" stroke="#ddd" stroke-width="2"/><circle cx="4" cy="14" r="1.500" fill="#222"/></svg></span>
                <span class="app"><svg viewBox="0 0 32 32"><path d="M22 1l9 4v22l-9 4-20-5 20 0zM22 8L13 16l9 8z" fill="#8661c5"/><path d="M2 9l4-2 7 6 9-12v8l-9 7 9 8-9-6-7 5-4-2zM6 12v7l3-3.500z" fill="#8661c5"/></svg></span>
                <span class="app"><svg viewBox="0 0 32 32"><path d="M1 5l30-3v19L4 23z" fill="#c4c4c4" stroke="#eee"/><path d="M4 7l24-2v14L6 20z" fill="#4e93c8"/><path d="M6 14h5l2-5 3 9 2-6 2 3h6" fill="none" stroke="#d7f0ff" stroke-width="1.200"/><ellipse cx="17" cy="28" rx="9" ry="3.500" fill="#aaa"/></svg></span>
                <span class="app app-running app-split"><svg viewBox="0 0 32 34"><path d="M2 1h17l8 9v23H2z" fill="#e6e6e6"/><path d="M6 5h9M6 9h12M6 13h12M6 17h8M6 21h8M6 25h8" stroke="#999"/><path d="M20 12c-4 0-5 2-5 4v3h6v1h-8c-2 0-3 2-3 4s1 4 3 4h2v-3c0-2 2-4 4-4h5c2 0 3-1 3-3v-3c0-2-3-3-7-3z" fill="#3776ab" transform="translate(6 -3) scale(.9)"/><path d="M24 32c4 0 5-2 5-4v-3h-5v-1h7c2 0 3-2 3-4s-1-4-3-4h-2v3c0 2-2 4-4 4h-5c-2 0-3 1-3 3v3c0 2 3 3 7 3z" fill="#ffd43b" transform="translate(2 -1) scale(.9)"/></svg></span>
            </div>
            <div class="tray">
                <svg width="26" height="28" viewBox="0 0 26 28"><circle cx="16" cy="6" r="4" fill="none" stroke="#fff" stroke-width="1.400"/><path d="M11 19c-1-4 1-7 5-7s7 3 7 8" fill="none" stroke="#fff" stroke-width="1.400"/><circle cx="8" cy="13" r="4" fill="#120e0e" stroke="#fff" stroke-width="1.400"/><path d="M2 27c-1-5 2-9 6-9s7 4 6 9" fill="none" stroke="#fff" stroke-width="1.400"/></svg>
                <svg class="tray-up" width="20" height="12" viewBox="0 0 20 12"><path d="M1 11l9-9 9 9" fill="none" stroke="#fff" stroke-width="1.300"/></svg>
                <svg class="tray-bat" width="24" height="14" viewBox="0 0 24 14"><rect x="1" y="1" width="20" height="12" fill="#fff" stroke="#fff"/><rect x="3" y="3" width="16" height="8" fill="#fff" stroke="#120e0e" stroke-width=".5"/><rect x="21" y="4" width="2" height="6" fill="#fff"/></svg>
                <svg class="tray-wifi" width="20" height="20" viewBox="0 0 20 20"><path d="M1 19C1 10 8 2 18 2M5 19c0-6 6-12 13-12M9 19c0-4 4-8 9-8" fill="none" stroke="#bbb" stroke-width="1.200"/><circle cx="17" cy="18" r="1.600" fill="#fff"/></svg>
                <svg class="tray-vol" width="22" height="22" viewBox="0 0 22 22"><path d="M1 8h4l6-6v18l-6-6H1z" fill="none" stroke="#fff" stroke-width="1.200"/><path d="M14 7c2 3 2 5 0 8M18 4c3 4 3 10 0 14" fill="none" stroke="#999" stroke-width="1.200"/></svg>
                <svg class="tray-box" width="22" height="20" viewBox="0 0 22 20"><path d="M6 1L1 4.500 6 8l5-3.500zM16 1l-5 3.500L16 8l5-3.500zM1 11.500L6 15l5-3.500L6 8zM21 11.500L16 15l-5-3.500L16 8zM6 16l5 3.500 5-3.500-5-3.500z" fill="#fff"/></svg>
                <span class="lang">ENG</span>
            </div>
            <div class="clock">
                <span>13:11</span>
                <span>17/06/2018</span>
            </div>
            <div class="notify">
                <svg width="26" height="30" viewBox="0 0 26 30"><path d="M1 1h24v19H11l-5 6v-6H1z" fill="#fff"/><path d="M6 7h14M6 11h14M6 15h10" stroke="#120e0e" stroke-width="1.200"/></svg>
                <span class="badge">3</span>
            </div>
        </div>

        <script src="script.js"></script>
    </body>
</html>
```

FILE: styles.css
```css
* {
    box-sizing: border-box;
}

html,
body {
    margin: 0;
    padding: 0;
    height: 100%;
    overflow: hidden;
}

body {
    display: flex;
    flex-direction: column;
    width: 1920px;
    height: 1080px;
    background: #ffffff;
    color: #111111;
    font-family: "Open Sans", "Noto Sans", sans-serif;
    font-size: 15px;
}

button {
    padding: 0;
    border: 0;
    background: none;
}

.defs {
    position: absolute;
}

.glyph {
    font-family: "Liberation Sans", sans-serif;
    font-weight: 700;
    fill: #111111;
}

.glyph.serif {
    font-family: "Liberation Serif", serif;
}

/* title and menu */
.titlebar {
    display: flex;
    align-items: center;
    height: 36px;
    padding-left: 2px;
}

.app-icon {
    width: 24px;
    height: 26px;
    margin-right: 6px;
}

.title-text {
    font-size: 17px;
}

.win-controls {
    display: flex;
    align-items: center;
    gap: 55px;
    margin-left: auto;
    margin-right: 29px;
    margin-top: -2px;
}

.menubar {
    display: flex;
    gap: 14.5px;
    align-items: center;
    height: 29px;
    padding-left: 8px;
    padding-bottom: 1px;
    border-bottom: 1px solid #d9d9d9;
    font-size: 16.3px;
}

/* toolbars */
.toolbar {
    display: flex;
    align-items: center;
    height: 30px;
    padding-left: 2px;
    border-bottom: 1px solid #d9d9d9;
}

.toolbar-tall {
    height: 47px;
}

.tb {
    display: flex;
    align-items: center;
    justify-content: center;
    flex: none;
    width: 26px;
    height: 25px;
}

.tb.on {
    background: #cce8ff;
    border: 1px solid #99d1ff;
}

.ic {
    width: 20px;
    height: 20px;
}

.sep {
    flex: none;
    width: 1px;
    height: 20px;
    margin: 0 6px 0 5px;
    background: #a0a0a0;
}

.toolbar-tall .sep {
    height: 28px;
    margin-left: 5px;
}

.toolbar-tall .sep-unit {
    margin: 0 6px 0 5px;
}

.field {
    display: flex;
    align-items: center;
    margin-left: 9px;
}

.field label {
    width: 17px;
    color: #777777;
    font-size: 15px;
}

.field-w label {
    width: 25px;
}

.field-h {
    margin-left: 19px;
}

.field-h label {
    width: 19px;
}

.num {
    display: flex;
    align-items: center;
    width: 62px;
    height: 29px;
    padding-left: 3px;
    border: 1px solid #a8a8a8;
    border-width: 1px 2px 2px 1px;
    background: #f0f0f0;
    color: #5b84a8;
    font-size: 15.5px;
}

.spinner {
    flex: none;
    width: 11px;
    height: 29px;
    background: #eeeeee;
}

.wh-lock {
    width: 8px;
    height: 10px;
    margin-left: 9px;
}

.combo {
    display: flex;
    align-items: stretch;
    border: 2px solid #b0b0b0;
    background: #ffffff;
}

.combo b {
    display: flex;
    align-items: center;
    justify-content: center;
    background: #dcdcdc;
    font-weight: 400;
}

.combo-unit {
    width: 59px;
    height: 27px;
    font-size: 16px;
    line-height: 21px;
}

.combo-unit span {
    width: 34px;
    padding-left: 2px;
}

.combo-unit b {
    flex: 1;
}

.toggles {
    display: flex;
    height: 43px;
}

.toggles button {
    display: flex;
    align-items: center;
    justify-content: center;
    width: 26px;
    background: #cce8ff;
    border: 1px solid #99d1ff;
}

.toggles svg {
    width: 14px;
    height: 14px;
}

/* work area */
.workspace {
    display: flex;
    flex: 1;
    min-height: 0;
}

.toolbox {
    display: flex;
    flex-direction: column;
    flex: none;
    width: 34px;
    padding: 2px 0 0 2px;
}

.tool {
    display: flex;
    align-items: center;
    justify-content: center;
    width: 30px;
    height: 30px;
    flex: none;
}

.tool.on {
    background: #cce8ff;
    border: 1px solid #99d1ff;
}

.tool svg {
    width: 25px;
    height: 25px;
}

.editor {
    display: flex;
    flex-direction: column;
    flex: 1;
    min-width: 0;
}

.ruler-row {
    display: flex;
    height: 21px;
    background: #f0f0f0;
}

.corner {
    flex: none;
    width: 23px;
    padding: 6px 0 0 7px;
}

.ruler-h {
    position: relative;
    display: flex;
    flex: none;
    width: 1794px;
    padding-left: 63.8px;
    overflow: hidden;
    border-bottom: 2px solid #000000;
    background-image:
        linear-gradient(to right, #000 1px, transparent 1px),
        linear-gradient(to right, #000 1px, transparent 1px),
        linear-gradient(to right, #000 1px, transparent 1px);
    background-size: 57px 16px, 28.5px 9px, 5.7px 5px;
    background-position: 6.8px bottom, 6.8px bottom, 1.1px bottom;
    background-repeat: repeat-x;
}

.ruler-h .mark {
    flex: none;
    width: 114px;
    padding: 3px 0 0 2px;
    font-family: "Liberation Sans", sans-serif;
    font-size: 10.5px;
    line-height: 11px;
    letter-spacing: -0.2px;
    color: #111111;
}

.ruler-pointer {
    position: absolute;
    left: 942px;
    bottom: 0;
    border: 5px solid transparent;
    border-top: 6px solid #000000;
    border-bottom: 0;
}

.corner-end {
    flex: 1;
    padding: 1px 0 0 7px;
    background: #f0f0f0;
}

.editor-mid {
    display: flex;
    flex: 1;
    min-height: 0;
}

.ruler-v {
    position: relative;
    flex: none;
    width: 21px;
    overflow: hidden;
    border-right: 2px solid #000000;
    background-color: #f0f0f0;
    background-image:
        linear-gradient(#000 1px, transparent 1px),
        linear-gradient(#000 1px, transparent 1px),
        linear-gradient(#000 1px, transparent 1px);
    background-size: 17px 114px, 7px 57px, 4px 11.4px;
    background-position: right 90.7px, right 33.7px, right 10.9px;
    background-repeat: repeat-y;
}

.ruler-v .mark {
    height: 114px;
    width: 12px;
    padding: 3px 0 0 3px;
    font-family: "Liberation Sans", sans-serif;
    font-size: 11px;
    line-height: 11.5px;
    word-break: break-all;
    color: #12305a;
}

.ruler-v .mark:first-of-type {
    margin-top: -23.3px;
}

.ruler-pointer-v {
    position: absolute;
    top: 389px;
    right: 0;
    border: 5.5px solid transparent;
    border-left: 6px solid #000000;
    border-right: 0;
}

.canvas {
    flex: none;
    width: 1798px;
    height: 100%;
    background: #ffffff;
}

.drawing {
    display: block;
}

.lincoln {
    font-family: "Liberation Serif", serif;
    font-style: italic;
    font-size: 114px;
    fill: #000000;
    stroke: #000000;
    stroke-width: 0.5px;
}

.stroke {
    fill: none;
    stroke: #000000;
    stroke-width: 8px;
    stroke-linejoin: round;
}

.solid {
    fill: #000000;
    stroke: #000000;
    stroke-width: 4px;
    stroke-linejoin: round;
}

.vscroll {
    position: relative;
    display: flex;
    flex-direction: column;
    align-items: center;
    justify-content: space-between;
    flex: 1;
    padding: 5px 7px 9px 0;
    background: #f0f0f0;
}

.vthumb {
    position: absolute;
    top: 327px;
    left: 1px;
    width: 23px;
    height: 9px;
    background: #cdcdcd;
}

.hscroll {
    position: relative;
    display: flex;
    align-items: center;
    justify-content: space-between;
    height: 25px;
    padding: 0 42px 0 31px;
    background: #f0f0f0;
}

.hthumb {
    position: absolute;
    top: 0;
    left: 1019px;
    width: 11px;
    height: 23px;
    background: #cdcdcd;
}

.cms {
    position: absolute;
    right: 17px;
    top: 8px;
}

.dock {
    flex: none;
    width: 36px;
    padding-top: 2px;
    background: #f0f0f0;
}

/* tabs read bottom to top, so the first tab sits at the bottom */
.dock-tabs {
    display: flex;
    gap: 11px;
    height: 100%;
    padding-top: 245px;
    border-right: 2px solid #000000;
    border-bottom: 1px solid #000000;
    background: #f7f7f7;
    writing-mode: vertical-rl;
    transform: rotate(180deg);
    font-size: 17px;
}

.dock-tab {
    display: flex;
    align-items: center;
    gap: 1px;
    white-space: nowrap;
    line-height: 34px;
}

.dock-tab svg {
    transform: rotate(90deg);
}

/* palette */
.palette {
    display: flex;
    height: 17px;
    padding-left: 2px;
    border-top: 2px solid #555555;
    overflow: hidden;
}

.swatch {
    flex: none;
    width: 14px;
    height: 15px;
}

.swatch.none {
    border: 1px solid #666666;
    border-width: 0 1px 0 0;
}

.palette-scroll {
    display: flex;
    align-items: center;
    justify-content: space-between;
    height: 15px;
    margin-top: 3px;
    padding: 0 18px 0 8px;
    background: #eeeeee;
    position: relative;
}

.pthumb {
    position: absolute;
    top: 0;
    left: 26px;
    width: 585px;
    height: 15px;
    background: #cbcbcb;
}

/* status */
.statusbar {
    display: flex;
    align-items: center;
    height: 42px;
    border-bottom: 1px solid #c8c8c8;
    background: #eeeeee;
    font-size: 15px;
}

.fillstroke {
    display: grid;
    grid-template-columns: 70px 46px;
    flex: none;
    width: 123px;
    padding-left: 3px;
    line-height: 21px;
}

.opacity {
    display: flex;
    align-items: center;
}

.opacity label {
    width: 17px;
}

.num-o {
    width: 36px;
    background: #eeeeee;
    color: #888888;
    border-width: 1px;
    padding-left: 4px;
}

.status-sep {
    flex: none;
    width: 1px;
    height: 42px;
    margin-left: 4px;
    background: #bbbbbb;
}

.layer-ic {
    flex: none;
    width: 9px;
    height: 10px;
    margin-left: 7px;
}

.layer-ic + .layer-ic {
    margin-left: 11px;
    margin-right: 5px;
}

.combo-layer {
    flex: none;
    width: 93px;
    height: 41px;
    font-size: 14.5px;
}

.combo-layer span {
    display: flex;
    align-items: center;
    width: 64px;
    padding-left: 11px;
}

.combo-layer b {
    flex: 1;
}

.hint {
    margin: 0 0 0 2px;
    font-size: 17px;
    white-space: nowrap;
}

.coords {
    display: grid;
    grid-template-columns: 15px 69px;
    flex: none;
    height: 41px;
    margin-left: auto;
    margin-right: 12px;
    padding-left: 4px;
    border-left: 1px solid #bbbbbb;
    line-height: 21px;
}

.coords code {
    font-family: "Liberation Mono", monospace;
    font-size: 14px;
    letter-spacing: 1.45px;
    text-align: right;
}

.zoom-label {
    width: 15px;
}

.num-z {
    width: 45px;
    background: #ffffff;
    color: #111111;
    overflow: hidden;
    padding-left: 3px;
    border-width: 1px;
}

.spinner-z {
    margin-right: 1px;
}

/* taskbar */
.taskbar {
    display: flex;
    align-items: center;
    height: 60px;
    background: #120e0e;
    color: #ffffff;
}

.start {
    flex: none;
    margin-left: 24px;
    margin-right: 24px;
}

.searchbox {
    display: flex;
    align-items: center;
    flex: none;
    width: 516px;
    height: 100%;
    padding-left: 13px;
    background: #f0f0f0;
    color: #2b2b2b;
    font-size: 19.7px;
}

.cortana {
    flex: none;
    width: 34px;
    height: 34px;
    margin-right: 14px;
    border-radius: 50%;
    background: #ffffff;
    border: 5px solid #111111;
    box-shadow: 0 0 0 1px #888888;
}

.mic {
    margin-left: auto;
    margin-right: 23px;
}

.taskview {
    flex: none;
    margin-left: 23px;
    margin-right: 27px;
}

.apps {
    display: flex;
    flex: none;
    height: 100%;
}

.app {
    display: flex;
    align-items: center;
    justify-content: center;
    flex: none;
    width: 68px;
    height: 100%;
    padding-bottom: 1px;
    border-bottom: 3px solid transparent;
}

.app svg {
    width: 34px;
    height: 34px;
}

.app-running {
    border-image: linear-gradient(to right, transparent 6px, #76b9ed 6px, #76b9ed 60px, transparent 60px) 1;
}

.app-active {
    background: #403a3a;
    border-bottom-color: #76b9ed;
}

.tray {
    display: flex;
    align-items: center;
    gap: 14px;
    margin-left: 30px;
}

.tray-up {
    margin-left: 18px;
}

.lang {
    margin-left: 3px;
    font-size: 17px;
}

.clock {
    display: flex;
    flex-direction: column;
    align-items: center;
    flex: none;
    width: 110px;
    margin-left: 12px;
    font-size: 17.5px;
    line-height: 28px;
}

.notify {
    position: relative;
    margin-left: 19px;
}

.notify svg {
    display: block;
}

.badge {
    position: absolute;
    left: 12px;
    top: 15px;
    width: 24px;
    height: 24px;
    border: 1px solid #888888;
    border-radius: 50%;
    background: #222222;
    font-size: 14px;
    font-weight: 700;
    line-height: 22px;
    text-align: center;
}
```

FILE: script.js
```js
// Build the palette swatches (Inkscape default palette)
const colors = [
    "000000", "1a1a1a", "333333", "4d4d4d", "666666", "808080", "999999", "b3b3b3", "cccccc", "e6e6e6", "ececec", "f2f2f2", "f9f9f9", "ffffff",
    "800000", "ff0000", "808000", "ffff00", "008000", "00ff00", "008080", "00ffff", "000080", "0000ff", "800080", "ff00ff",
    "2b0000", "550000", "800000", "aa0000", "d40000", "ff0000", "ff2a2a", "ff5555", "ff8080", "ffaaaa", "ffd5d5",
    "280b0b", "501616", "782121", "a02c2c", "c83737", "d35f5f", "de8787", "e9afaf", "f4d7d7",
    "241c1c", "483737", "6c5353", "916f6f", "ac9393", "c8b7b7", "e3dbdb",
    "2b1100", "552200", "803300", "aa4400", "d45500", "ff6600", "ff7f2a", "ff9955", "ffb380", "ffccaa", "ffe6d5",
    "28170b", "502d16", "784421", "a05a2c", "c87137", "d38d5f", "deaa87", "e9c6af", "f4e3d7",
    "241f1c", "483e37", "6c5d53", "917c6f", "ac9d93", "c8beb7", "e3dedb",
    "2b2200", "554400", "806600", "aa8800", "d4aa00", "ffcc00", "ffd42a", "ffdd55", "ffe680", "ffeeaa", "fff6d5",
    "28220b", "504416", "786721", "a0892c", "c8ab37", "d3bc5f", "decd87", "e9ddaf", "f4eed7",
    "24221c", "484537", "6c6753", "918a6f", "aca793", "c8c4b7", "e3e2db",
    "222b00", "445500", "668000", "88aa00", "aad400", "ccff00", "d4ff2a", "ddff55", "e5ff80", "eeffaa", "f6ffd5",
    "22280b", "445016", "677821", "89a02c", "abc837", "bcd35f", "cdde87", "dde9af", "eef4d7",
    "22241c", "454837", "676c53", "8a916f", "a7ac93", "c4c8b7", "e2e3db",
    "112b00"
];
const palette = document.getElementById("palette");
colors.forEach(function (c) {
    const swatch = document.createElement("span");
    swatch.className = "swatch";
    swatch.style.background = "#" + c;
    palette.appendChild(swatch);
});

// Ruler labels
const rulerH = document.getElementById("rulerH");
for (let n = 1005; n <= 1035; n += 2) {
    const mark = document.createElement("span");
    mark.className = "mark";
    mark.textContent = n;
    rulerH.appendChild(mark);
}
const rulerV = document.getElementById("rulerV");
for (let n = 936; n >= 924; n -= 2) {
    const mark = document.createElement("div");
    mark.className = "mark";
    mark.textContent = n;
    rulerV.appendChild(mark);
}
```
